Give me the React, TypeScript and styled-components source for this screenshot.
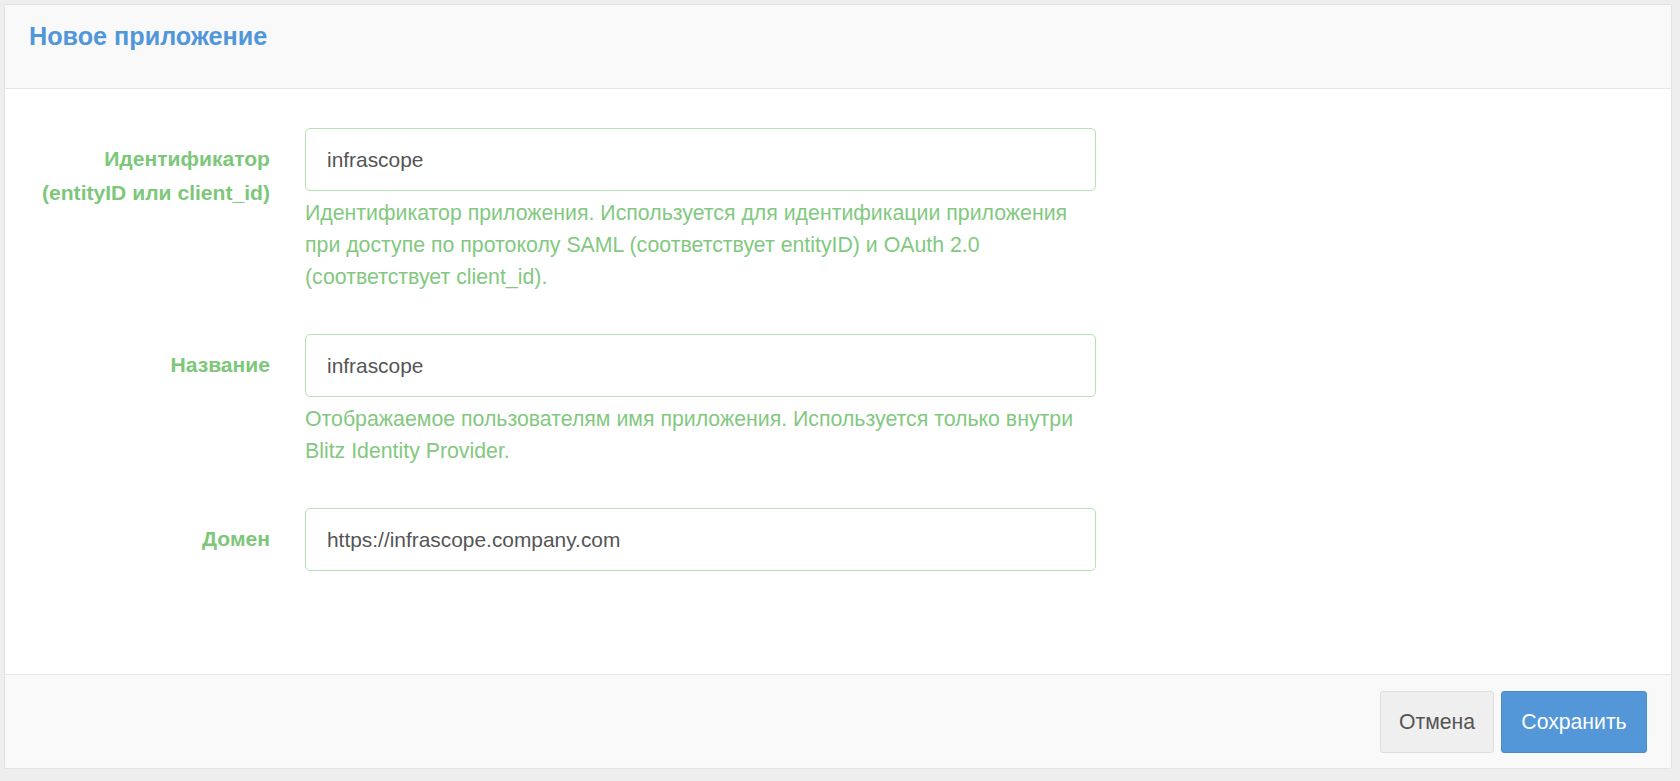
import React from 'react';
import styled, { createGlobalStyle } from 'styled-components';

const GlobalStyle = createGlobalStyle`
  html, body {
    margin: 0;
    padding: 0;
    background: #eeeeee;
    font-family: "Liberation Sans", Arial, Helvetica, sans-serif;
  }
  * {
    box-sizing: border-box;
  }
`;

const Page = styled.div`
  padding: 4px 8px 12px 4px;
`;

const Panel = styled.div`
  background: #ffffff;
  border: 1px solid #e2e2e2;
  border-radius: 2px;
`;

const PanelHeader = styled.div`
  height: 84px;
  padding: 17px 24px 0;
  background: #f9f9f9;
  border-bottom: 1px solid #e6e6e6;
`;

const Title = styled.h3`
  margin: 0;
  font-size: 25.2px;
  line-height: 28px;
  font-weight: bold;
  color: #5096d9;
`;

const PanelBody = styled.div`
  padding: 39px 0 103px;
  display: flex;
  flex-direction: column;
  gap: 41px;
`;

const FormRow = styled.div`
  display: grid;
  grid-template-columns: 265px 791px;
  column-gap: 35px;
`;

const Label = styled.label`
  padding-top: 14px;
  text-align: right;
  font-size: 21.1px;
  line-height: 34px;
  font-weight: bold;
  color: #7dc77a;
`;

const Field = styled.div`
  display: flex;
  flex-direction: column;
`;

const Input = styled.input`
  width: 100%;
  height: 63px;
  padding: 0 21px;
  font-family: inherit;
  font-size: 20.9px;
  color: #555555;
  background: #ffffff;
  border: 1px solid #b7e0b4;
  border-radius: 5px;
  outline: none;
`;

const Help = styled.p`
  margin: 6px 0 0;
  font-size: 21.3px;
  line-height: 32px;
  color: #82c97f;
`;

const PanelFooter = styled.div`
  display: flex;
  justify-content: flex-end;
  gap: 7px;
  padding: 16px 24px 15px;
  background: #f9f9f9;
  border-top: 1px solid #e6e6e6;
`;

const Button = styled.button<{ $primary?: boolean }>`
  width: ${(p) => (p.$primary ? '146px' : '114px')};
  height: 62px;
  padding: 0;
  font-family: inherit;
  font-size: 21.2px;
  border-radius: 3px;
  cursor: pointer;
  color: ${(p) => (p.$primary ? '#ffffff' : '#555555')};
  background: ${(p) => (p.$primary ? '#5397d8' : '#efefef')};
  border: 1px solid ${(p) => (p.$primary ? '#4a8ccc' : '#dddddd')};
`;

const fields = [
  {
    label: ['Идентификатор', '(entityID или client_id)'],
    value: 'infrascope',
    help: 'Идентификатор приложения. Используется для идентификации приложения при доступе по протоколу SAML (соответствует entityID) и OAuth 2.0 (соответствует client_id).',
  },
  {
    label: ['Название'],
    value: 'infrascope',
    help: 'Отображаемое пользователям имя приложения. Используется только внутри Blitz Identity Provider.',
  },
  {
    label: ['Домен'],
    value: 'https://infrascope.company.com',
  },
];

const App: React.FC = () => {
  return (
    <Page>
      <GlobalStyle />
      <Panel>
        <PanelHeader>
          <Title>Новое приложение</Title>
        </PanelHeader>
        <PanelBody>
          {fields.map((f, i) => (
            <FormRow key={i}>
              <Label>
                {f.label.map((l, j) => (
                  <div key={j}>{l}</div>
                ))}
              </Label>
              <Field>
                <Input defaultValue={f.value} />
                {f.help && <Help>{f.help}</Help>}
              </Field>
            </FormRow>
          ))}
        </PanelBody>
        <PanelFooter>
          <Button>Отмена</Button>
          <Button $primary>Сохранить</Button>
        </PanelFooter>
      </Panel>
    </Page>
  );
};

export default App;
